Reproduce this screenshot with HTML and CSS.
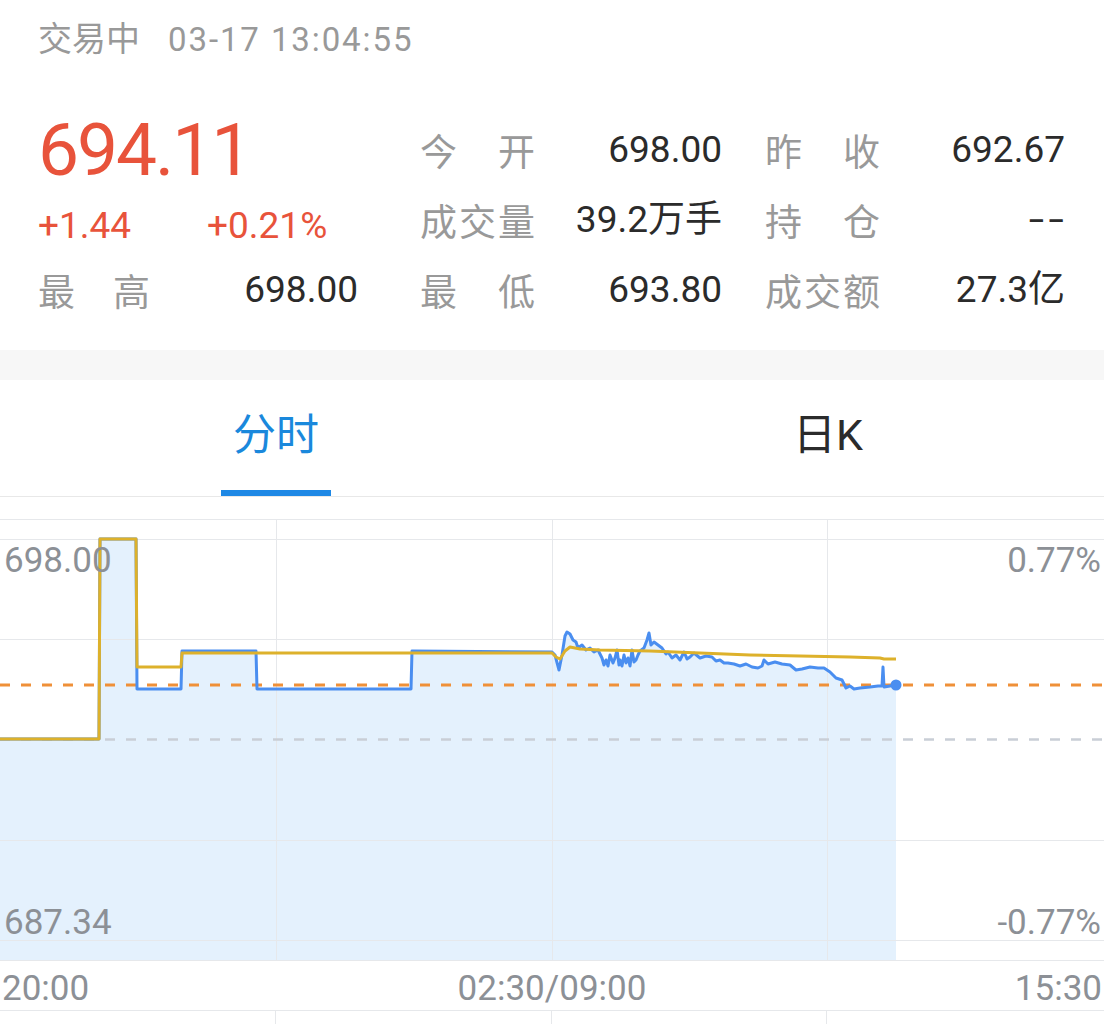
FILE: index.html
```html
<!DOCTYPE html>
<html lang="zh-CN">
<head>
<meta charset="utf-8">
<title>行情</title>
<link rel="stylesheet" href="styles.css">
</head>
<body>
<div class="status"><span class="cn">交易中</span><span class="time">03-17 13:04:55</span></div>

<div class="quote">
  <div class="main">
    <div class="price">694.11</div>
    <div class="change"><span class="chg">+1.44</span><span class="pct">+0.21%</span></div>
    <div class="kv"><span class="label lw"><i>最</i><i>高</i></span><span class="val">698.00</span></div>
  </div>
  <div class="stats">
    <div class="kv"><span class="label"><i>今</i><i>开</i></span><span class="val">698.00</span></div>
    <div class="kv"><span class="label"><i>昨</i><i>收</i></span><span class="val">692.67</span></div>
    <div class="kv"><span class="label"><i>成</i><i>交</i><i>量</i></span><span class="val">39.2万手</span></div>
    <div class="kv"><span class="label"><i>持</i><i>仓</i></span><span class="val dashes">--</span></div>
    <div class="kv"><span class="label"><i>最</i><i>低</i></span><span class="val">693.80</span></div>
    <div class="kv"><span class="label"><i>成</i><i>交</i><i>额</i></span><span class="val">27.3亿</span></div>
  </div>
</div>

<div class="band"></div>

<div class="tabs">
  <div class="tab active"><span class="tab-text">分时</span><span class="indicator"></span></div>
  <div class="tab"><span class="tab-text">日K</span><span class="indicator"></span></div>
</div>

<div class="chart">
  <svg class="chart-svg" width="1104" height="442" viewBox="0 0 1104 442">
    <polygon class="area" points="0,220 99,220 100,20 136,20 137,170 181,170 182,132 256,132 257,170 411,170 412,132 552,133 555,136 559,151 562,136 565,117 567,113 570,115 573,121 576,123 578,129 582,126 586,131 590,129 594,133 598,131 602,139 606,145 610,136 613,144 617,131 620,145 624,136 628,143 632,131 636,141 640,132 644,129 647,121 649,114 651,126 654,123 658,126 662,129 668,133 672,139 676,136 680,141 684,133 690,138 694,134 700,139 706,137 712,138 720,141 728,144 734,145 740,147 746,145 752,148 758,149 762,147 764,141 768,145 775,143 782,145 790,146 796,151 802,150 810,148 818,149 824,149 830,153 836,159 842,161 846,169 850,167 854,170 860,169 870,168 878,167 882,167 883,148 884,168 890,167 896,166 896,441 0,441"/>
    <line class="grid" x1="0" y1="0.5" x2="1104" y2="0.5"/>
    <line class="grid" x1="0" y1="20.5" x2="1104" y2="20.5"/>
    <line class="grid" x1="0" y1="120.5" x2="1104" y2="120.5"/>
    <line class="grid" x1="0" y1="321.5" x2="1104" y2="321.5"/>
    <line class="grid" x1="0" y1="421.5" x2="1104" y2="421.5"/>
    <line class="grid" x1="0" y1="441.5" x2="1104" y2="441.5"/>
    <line class="grid" x1="276.5" y1="0" x2="276.5" y2="442"/>
    <line class="grid" x1="552.5" y1="0" x2="552.5" y2="442"/>
    <line class="grid" x1="827.5" y1="0" x2="827.5" y2="442"/>
    <line class="dash-gray" x1="0" y1="220.5" x2="1104" y2="220.5"/>
    <line class="dash-orange" x1="0" y1="166" x2="1104" y2="166"/>
    <polyline class="price-line" points="0,220 99,220 100,20 136,20 137,170 181,170 182,132 256,132 257,170 411,170 412,132 552,133 555,136 559,151 562,136 565,117 567,113 570,115 573,121 576,123 578,129 582,126 586,131 590,129 594,133 598,131 602,139 604,146 606,141 608,147 610,136 613,144 615,139 617,131 619,146 620,141 622,147 624,136 626,144 628,139 630,147 632,131 634,143 636,141 638,136 640,132 644,129 647,121 649,114 651,126 654,123 658,126 662,129 666,135 668,133 672,139 676,136 680,141 684,133 687,140 690,138 694,134 700,139 706,137 712,138 716,142 720,141 724,144 728,144 734,145 740,147 746,145 752,148 758,149 762,147 764,141 768,145 775,143 782,145 790,146 796,151 802,150 810,148 818,149 824,149 830,153 836,159 842,161 846,169 850,167 854,170 860,169 870,168 878,167 882,167 883,148 884,168 890,167 896,166"/>
    <polyline class="avg-line" points="0,220 99,220 100,20 136,20 137,148 181,148 182,134 552,134 556,138 560,140 565,132 570,128 580,130 600,131 650,132 700,134 750,136 800,137 850,138 880,139 884,140 896,140"/>
    <circle class="dot" cx="896" cy="166" r="5.5"/>
    <text class="axis-text" x="4" y="53">698.00</text>
    <text class="axis-text end" x="1101" y="53">0.77%</text>
    <text class="axis-text" x="4" y="415">687.34</text>
    <text class="axis-text end" x="1101" y="415">-0.77%</text>
  </svg>
  <div class="times"><span>20:00</span><span>02:30/09:00</span><span>15:30</span></div>
  <div class="sub">
    <div class="sub-col"></div><div class="sub-col"></div><div class="sub-col"></div><div class="sub-col last"></div>
  </div>
</div>
</body>
</html>
```
FILE: styles.css
```css
html, body {
  margin: 0;
  padding: 0;
  background: #ffffff;
  overflow: hidden;
}
body {
  font-family: Roboto, "Noto Sans CJK SC", sans-serif;
  color: #333333;
  width: 1104px;
  height: 1024px;
}

.status {
  margin-top: 13px;
  height: 48px;
  line-height: 48px;
  padding-left: 38px;
  color: #999999;
  font-size: 34px;
  white-space: nowrap;
}
.status .cn {
  font-family: "Noto Sans CJK SC", sans-serif;
}
.status .time {
  margin-left: 28px;
  font-size: 33px;
  letter-spacing: 1.9px;
}

.quote {
  display: flex;
  margin-top: 54px;
  padding-left: 38px;
  height: 210px;
}
.main {
  width: 320px;
  display: grid;
  grid-template-rows: 70px 70px 70px;
}
.price {
  font-size: 73px;
  line-height: 70px;
  color: #e8533b;
  letter-spacing: -2px;
  white-space: nowrap;
}
.change {
  display: flex;
  font-size: 37px;
  line-height: 81px;
  color: #e8533b;
  white-space: nowrap;
}
.change .chg {
  width: 169px;
}

.stats {
  margin-left: 62px;
  display: grid;
  grid-template-columns: 302px 300px;
  grid-template-rows: 70px 70px 70px;
  column-gap: 43px;
}
.kv {
  display: flex;
  justify-content: space-between;
  line-height: 70px;
  height: 70px;
  white-space: nowrap;
}
.label {
  display: flex;
  justify-content: space-between;
  width: 115px;
  color: #999999;
  font-size: 37px;
  font-family: "Noto Sans CJK SC", sans-serif;
}
.label.lw {
  width: 112px;
}
.label i {
  font-style: normal;
}
.val {
  font-size: 37px;
  color: #2b2b2b;
}
.val.dashes {
  display: inline-block;
  letter-spacing: 3px;
  transform: scaleX(1.5);
  transform-origin: right center;
  margin-right: -3px;
}

.band {
  margin-top: 25px;
  height: 30px;
  background: #f7f7f7;
}

.tabs {
  display: flex;
  height: 116px;
  border-bottom: 1px solid #e8e8e8;
}
.tab {
  flex: 1;
  display: flex;
  flex-direction: column;
  align-items: center;
  padding-top: 25px;
  box-sizing: border-box;
}
.tab-text {
  height: 60px;
  line-height: 60px;
  font-size: 43px;
  color: #2b2b2b;
}
.tab.active .tab-text {
  color: #1a88dc;
}
.indicator {
  margin-top: 25px;
  width: 110px;
  height: 6px;
}
.tab.active .indicator {
  background: #1e88e5;
}

.chart {
  margin-top: 22px;
}
.chart-svg {
  display: block;
}
.area {
  fill: #e4f1fd;
}
.grid {
  stroke: #e6e8eb;
  stroke-width: 1;
}
.dash-gray {
  stroke: #c9ced6;
  stroke-width: 2.5;
  stroke-dasharray: 10 11;
}
.dash-orange {
  stroke: #ef9038;
  stroke-width: 3;
  stroke-dasharray: 10 11;
}
.price-line {
  fill: none;
  stroke: #4a8ef0;
  stroke-width: 3;
  stroke-linejoin: round;
}
.avg-line {
  fill: none;
  stroke: #ddb12b;
  stroke-width: 3;
  stroke-linejoin: round;
}
.dot {
  fill: #4a8ef0;
}
.axis-text {
  font-family: Roboto, sans-serif;
  font-size: 35px;
  fill: #8c9096;
}
.axis-text.end {
  text-anchor: end;
}

.times {
  display: flex;
  justify-content: space-between;
  height: 49px;
  line-height: 49px;
  padding: 3px 2px 0 2px;
  box-sizing: border-box;
  font-size: 35px;
  color: #8c9096;
}

.sub {
  display: grid;
  grid-template-columns: 276px 276px 275px 1fr;
  border-top: 1px solid #e6e8eb;
  height: 14px;
}
.sub-col {
  border-right: 1px solid #e6e8eb;
}
.sub-col.last {
  border-right: none;
}
```
